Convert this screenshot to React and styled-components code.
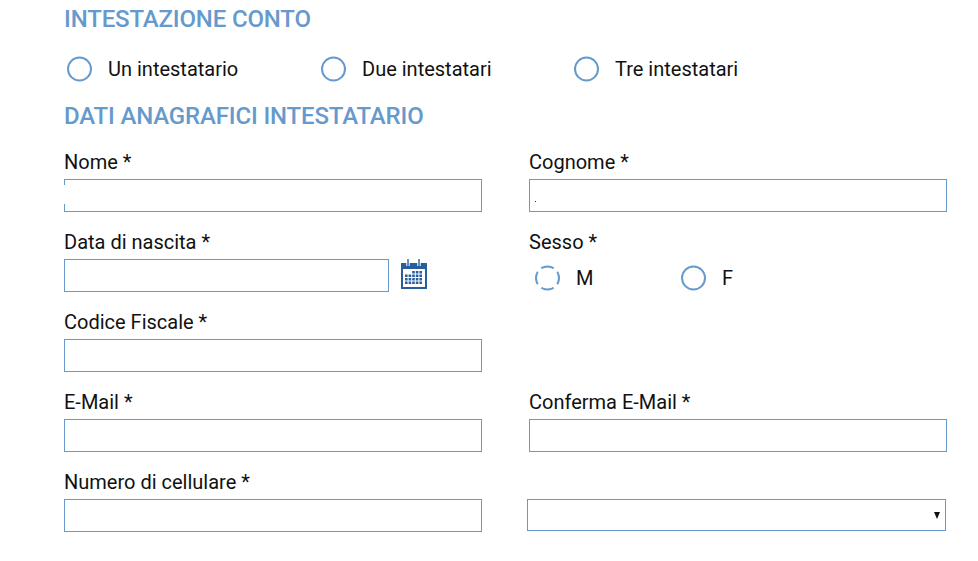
import React from 'react';
import styled, { createGlobalStyle } from 'styled-components';

const GlobalStyle = createGlobalStyle`
    html, body {
        margin: 0;
        padding: 0;
        background: #fff;
    }
    body {
        font-family: Roboto, "Liberation Sans", sans-serif;
        color: #111;
    }
`;

const Page = styled.form`
    width: 978px;
    height: 561px;
    box-sizing: border-box;
    padding: 6px 0 0 64px;
    overflow: hidden;
`;

const Heading = styled.h2`
    margin: 0;
    font-size: 24px;
    line-height: 26px;
    font-weight: 500;
    letter-spacing: -0.16px;
    color: #6699cc;
`;

const AccountChoices = styled.div`
    display: flex;
    margin: 24px 0 21px 3px;
    height: 26px;
`;

const Choice = styled.label`
    display: flex;
    align-items: center;
    width: ${props => props.width}px;
    font-size: 20px;
    line-height: 26px;

    svg {
        flex: none;
        margin-right: 16px;
    }
`;

const FieldGrid = styled.div`
    display: grid;
    grid-template-columns: 418px 418px;
    column-gap: 47px;
    grid-auto-rows: 80px;
    margin-top: 23px;
`;

const Field = styled.div`
    display: flex;
    flex-direction: column;
`;

const Label = styled.label`
    font-size: 20px;
    line-height: 20px;
    height: 27px;
`;

const InputRow = styled.div`
    display: flex;
    align-items: flex-start;
    position: relative;
`;

const TextInput = styled.input`
    box-sizing: border-box;
    width: ${props => props.width || 418}px;
    height: 33px;
    padding: 0 8px;
    border: 1px solid #6699cc;
    border-radius: 0;
    background: #fff;
    outline: none;
`;

const BorderGap = styled.span`
    position: absolute;
    left: 0;
    top: 6px;
    width: 1px;
    height: 19px;
    background: #fff;
`;

const Speck = styled.span`
    position: absolute;
    left: 6px;
    top: 22px;
    width: 1px;
    height: 1px;
    background: #3a2a20;
`;

const CalendarButton = styled.span`
    display: block;
    margin: 0 0 0 12px;
    height: 30px;
`;

const SexChoices = styled.div`
    display: flex;
    margin: 6px 0 0 6px;
    height: 26px;
`;

const SelectWrap = styled.div`
    position: relative;
    margin: 27px 0 0 -2px;
    width: 419px;
    height: 33px;
`;

const PrefixSelect = styled.select`
    display: block;
    box-sizing: border-box;
    width: 100%;
    height: 32px;
    padding: 0 8px;
    border: 1px solid #6699cc;
    border-radius: 0;
    background: #fff;
    appearance: none;
    outline: none;
`;

const SelectArrow = styled.span`
    position: absolute;
    right: 6px;
    top: 13px;
    width: 0;
    height: 0;
    border-left: 3.5px solid transparent;
    border-right: 3.5px solid transparent;
    border-top: 7px solid #111;
    pointer-events: none;
`;

const Radio = ({ broken }) => (
    <svg width="25" height="26" viewBox="0 0 25 26" aria-hidden="true">
        <circle cx="12.5" cy="13" r="11.5" fill="#fff" stroke="#6699cc" strokeWidth="2" />
        {broken && (
            <g stroke="#fff" strokeWidth="5">
                <path d="M2.5 3l4.5 4.5M22.5 3l-4.5 4.5M2.5 23l4.5-4.5M22.5 23l-4.5-4.5" />
            </g>
        )}
    </svg>
);

const CalendarIcon = () => (
    <svg width="26" height="30" viewBox="0 0 26 30" aria-hidden="true">
        <rect x="0" y="4" width="26" height="26" fill="#2a5d9c" />
        <rect x="2" y="10" width="22" height="18" fill="#fff" />
        <path d="M7 0v7M18 0v7" stroke="#fff" strokeWidth="3.4" />
        <path d="M7 0v7M18 0v7" stroke="#3f78b5" strokeWidth="1.6" />
        <g fill="#2a5d9c">
            {[12, 15.5, 19, 22.5].map(y =>
                [4, 7.6, 11.2, 14.8, 18.4].map(x =>
                    y === 12 && x < 8 ? null : <rect key={`${x}-${y}`} x={x} y={y} width="2.6" height="2.5" />
                )
            )}
        </g>
    </svg>
);

export default function App() {
    return (
        <>
            <GlobalStyle />
            <Page>
                <Heading>INTESTAZIONE CONTO</Heading>
                <AccountChoices>
                    <Choice width={254}><Radio />Un intestatario</Choice>
                    <Choice width={253}><Radio />Due intestatari</Choice>
                    <Choice width={200}><Radio />Tre intestatari</Choice>
                </AccountChoices>
                <Heading>DATI ANAGRAFICI INTESTATARIO</Heading>
                <FieldGrid>
                    <Field>
                        <Label>Nome *</Label>
                        <InputRow>
                            <TextInput />
                            <BorderGap />
                        </InputRow>
                    </Field>
                    <Field>
                        <Label>Cognome *</Label>
                        <InputRow>
                            <TextInput />
                            <Speck />
                        </InputRow>
                    </Field>
                    <Field>
                        <Label>Data di nascita *</Label>
                        <InputRow>
                            <TextInput width={325} />
                            <CalendarButton><CalendarIcon /></CalendarButton>
                        </InputRow>
                    </Field>
                    <Field>
                        <Label>Sesso *</Label>
                        <SexChoices>
                            <Choice width={146}><Radio broken />M</Choice>
                            <Choice width={100}><Radio />F</Choice>
                        </SexChoices>
                    </Field>
                    <Field>
                        <Label>Codice Fiscale *</Label>
                        <InputRow>
                            <TextInput />
                        </InputRow>
                    </Field>
                    <div />
                    <Field>
                        <Label>E-Mail *</Label>
                        <InputRow>
                            <TextInput />
                        </InputRow>
                    </Field>
                    <Field>
                        <Label>Conferma E-Mail *</Label>
                        <InputRow>
                            <TextInput />
                        </InputRow>
                    </Field>
                    <Field>
                        <Label>Numero di cellulare *</Label>
                        <InputRow>
                            <TextInput />
                        </InputRow>
                    </Field>
                    <SelectWrap>
                        <PrefixSelect />
                        <SelectArrow />
                    </SelectWrap>
                </FieldGrid>
            </Page>
        </>
    );
}
